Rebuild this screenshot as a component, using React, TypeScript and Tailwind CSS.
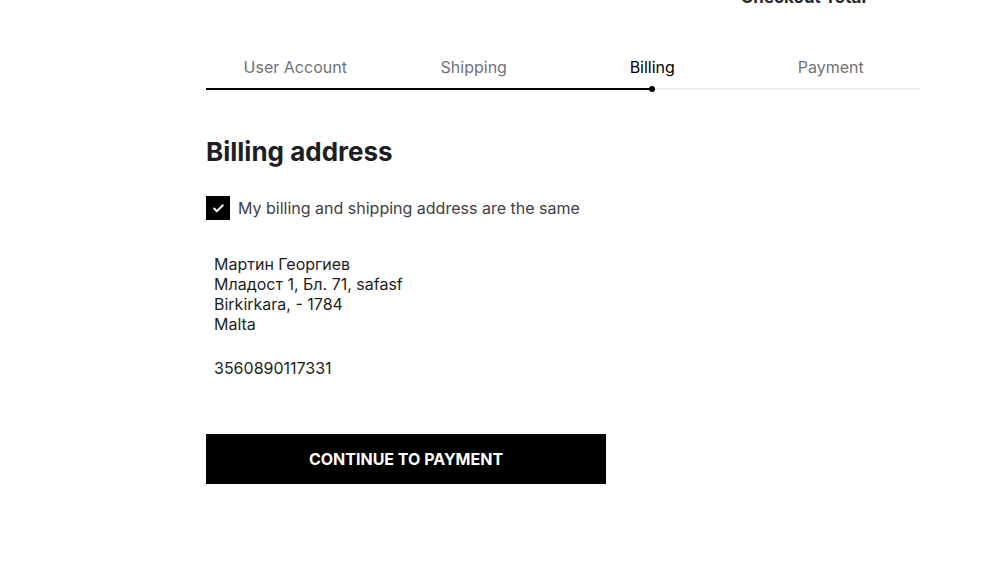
import { Check } from 'lucide-react';

const steps = ['User Account', 'Shipping', 'Billing', 'Payment'];
const activeStep = 2;

function App() {
  return (
    <div className="min-h-screen w-full bg-white font-['Inter',sans-serif] text-[#1e1e22]">
      <div className="ml-[206px] w-[714px]">
        {/* header text scrolled mostly out of view */}
        <div className="h-[4px] overflow-hidden flex justify-end pr-[54px]">
          <div className="-mt-[11px] text-[17px] font-bold leading-[17px] text-[#2a2a2e]">Checkout Total</div>
        </div>

        {/* steps */}
        <div className="mt-[51px] grid grid-cols-4">
          {steps.map((s, i) => (
            <div
              key={s}
              className={`text-center text-[16px] leading-[24px] pb-[9px] ${i === activeStep ? 'text-black' : 'text-[#6f7279]'}`}
            >
              {s}
            </div>
          ))}
        </div>
        <div className="relative h-[2px] bg-[#efefef]">
          <div className="absolute left-0 top-0 h-[2px] w-[446px] bg-black" />
          <div className="absolute left-[443px] top-[-2px] h-[6px] w-[6px] rounded-full bg-black" />
        </div>

        <h1 className="mt-[46px] text-[26px] font-bold leading-[32px] text-[#1e1e22]">Billing address</h1>

        <label className="mt-[28px] flex items-center gap-[8px]">
          <span className="flex h-[24px] w-[24px] items-center justify-center bg-black">
            <Check size={13} strokeWidth={3.5} className="text-white" />
          </span>
          <span className="text-[16px] leading-[24px] text-[#3f4046] -mt-[1px]">My billing and shipping address are the same</span>
        </label>

        <div className="mt-[34px] pl-[8px] text-[16px] leading-[20px] text-[#1e1e22]">
          <p>Мартин Георгиев</p>
          <p>Младост 1, Бл. 71, safasf</p>
          <p>Birkirkara, - 1784</p>
          <p>Malta</p>
          <p className="mt-[24px]">3560890117331</p>
        </div>

        <button className="mt-[56px] flex h-[50px] w-[400px] items-center justify-center bg-black text-[16px] font-bold uppercase text-white">
          Continue to payment
        </button>
      </div>
    </div>
  );
}

export default App;
